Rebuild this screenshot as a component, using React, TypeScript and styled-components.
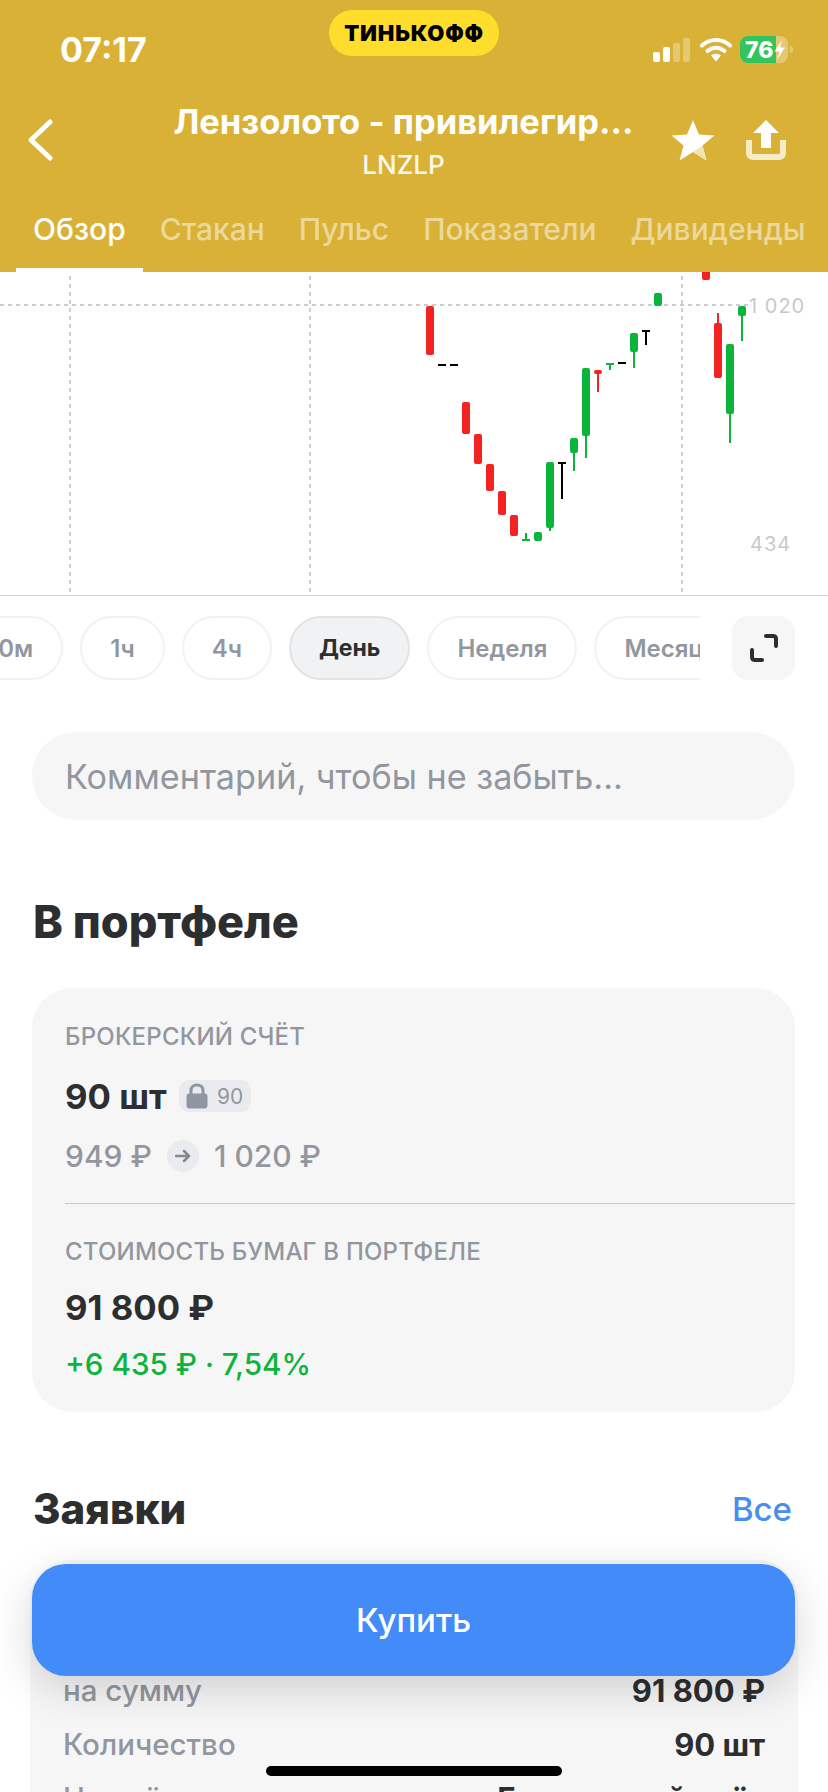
import React, { FunctionComponent } from 'react';
import styled, { createGlobalStyle } from 'styled-components';

const GlobalStyle = createGlobalStyle`
  html, body {
    margin: 0;
    padding: 0;
    background: #fff;
  }
  body {
    font-family: Inter, "Noto Sans", "Liberation Sans", sans-serif;
    color: #2d2e30;
  }
  * {
    box-sizing: border-box;
  }
`;

const Page = styled.div`
  position: relative;
  width: 828px;
  height: 1792px;
  overflow: hidden;
  background: #fff;
`;

const Header = styled.header`
  height: 272px;
  background: #d8b136;
  display: flex;
  flex-direction: column;
  color: #fff;
`;

const StatusBar = styled.div`
  height: 96px;
  display: grid;
  grid-template-columns: 269px 170px 1fr;
  padding: 10px 34px 0 60px;
`;

const Clock = styled.div`
  font-size: 34px;
  font-weight: 700;
  line-height: 38px;
  padding-top: 21px;
`;

const BrandPill = styled.div`
  height: 46px;
  width: 170px;
  border-radius: 23px;
  background: #ffdd2d;
  color: #000;
  font-size: 22px;
  font-weight: 900;
  letter-spacing: 0.8px;
  display: flex;
  align-items: center;
  justify-content: center;
`;

const StatusIcons = styled.div`
  display: flex;
  justify-content: flex-end;
  align-items: flex-start;
  padding-top: 26px;
`;

const NavBar = styled.div`
  height: 94px;
  display: flex;
  align-items: center;
  padding: 0 42px 6px 27px;
`;

const NavTitleBlock = styled.div`
  flex: 1;
  display: flex;
  flex-direction: column;
  align-items: center;
  padding-left: 83px;
`;

const NavTitle = styled.div`
  font-size: 34.5px;
  font-weight: 700;
  line-height: 42px;
  white-space: nowrap;
`;

const NavTicker = styled.div`
  font-size: 26px;
  font-weight: 500;
  line-height: 30px;
  margin-top: 7px;
  opacity: 0.92;
`;

const NavActions = styled.div`
  display: flex;
  align-items: center;
  gap: 31px;
`;

const Tabs = styled.nav`
  height: 82px;
  display: flex;
  padding-left: 16px;
  overflow: hidden;
`;

const Tab = styled.div<{ $active?: boolean }>`
  padding: 0 17px;
  display: flex;
  align-items: center;
  font-size: 30px;
  font-weight: 500;
  white-space: nowrap;
  color: ${(props) => (props.$active ? '#fff' : 'rgba(255, 255, 255, 0.5)')};
  border-bottom: 4px solid ${(props) => (props.$active ? '#fff' : 'transparent')};
`;

const ChartWrap = styled.div`
  height: 324px;
  border-bottom: 1px solid #cfcfcf;
`;

const ChartSvg = styled.svg`
  display: block;
  width: 828px;
  height: 323px;
`;

const PeriodRow = styled.div`
  display: flex;
  margin: 20px 33px 0 0;
  align-items: stretch;
`;

const PeriodScroll = styled.div`
  width: 700px;
  height: 64px;
  overflow: hidden;
  margin-right: 32px;
`;

const PeriodTrack = styled.div`
  display: flex;
  gap: 17px;
  margin-left: -47px;
  width: 900px;
`;

const PeriodChip = styled.div<{ $active?: boolean }>`
  height: 64px;
  padding: 0 28px;
  border-radius: 32px;
  flex: none;
  display: flex;
  align-items: center;
  font-size: ${(props) => (props.$active ? 23 : 24)}px;
  font-weight: ${(props) => (props.$active ? 700 : 600)};
  color: ${(props) => (props.$active ? '#2d2e30' : '#92979f')};
  background: ${(props) => (props.$active ? '#f1f2f4' : '#fff')};
  border: 2px solid ${(props) => (props.$active ? '#e1e3e5' : '#f1f2f4')};
`;

const ExpandButton = styled.div`
  width: 63px;
  height: 64px;
  border-radius: 16px;
  background: #f6f6f7;
  display: flex;
  align-items: center;
  justify-content: center;
`;

const CommentField = styled.div`
  margin: 52px 33px 0 32px;
  height: 88px;
  border-radius: 44px;
  background: #f6f6f7;
  color: #92979f;
  font-size: 34.2px;
  display: flex;
  align-items: center;
  padding-left: 33px;
`;

const SectionHead = styled.div`
  display: flex;
  justify-content: space-between;
  align-items: center;
  margin: 0 36px 0 33px;
`;

const SectionTitle = styled.h2<{ $size: number }>`
  margin: 0;
  font-size: ${(props) => props.$size}px;
  line-height: 48px;
  font-weight: 800;
  color: #2d2e30;
`;

const SectionLink = styled.div`
  font-size: 33px;
  font-weight: 500;
  color: #4a8df0;
`;

const PortfolioHead = styled(SectionHead)`
  margin-top: 78px;
`;

const OrdersHead = styled(SectionHead)`
  margin-top: 73px;
`;

const PortfolioCard = styled.section`
  margin: 42px 33px 0 32px;
  height: 424px;
  border-radius: 40px;
  background: #f6f6f7;
  padding: 34px 0 0 33px;
`;

const CardLabel = styled.div`
  font-size: 24px;
  line-height: 30px;
  font-weight: 500;
  letter-spacing: 0.2px;
  color: #92979f;
`;

const StrongValue = styled.div`
  font-size: 34.7px;
  line-height: 40px;
  font-weight: 700;
  color: #2d2e30;
`;

const QuantityRow = styled.div`
  display: flex;
  align-items: center;
  margin-top: 24px;
  gap: 12px;
`;

const LockBadge = styled.div`
  height: 32px;
  width: 72px;
  border-radius: 10px;
  background: #e9ebee;
  display: flex;
  align-items: center;
  justify-content: center;
  gap: 9px;
  font-size: 21px;
  color: #92979f;
`;

const PriceRow = styled.div`
  display: flex;
  align-items: center;
  margin-top: 20px;
  font-size: 30px;
  line-height: 40px;
  font-weight: 500;
  color: #92979f;
`;

const ArrowCircle = styled.div`
  width: 32px;
  height: 32px;
  border-radius: 50%;
  background: #e9ebee;
  margin: 0 15px;
  display: flex;
  align-items: center;
  justify-content: center;
`;

const CardDivider = styled.div`
  height: 1px;
  background: #c8cacd;
  margin: 27px 0 33px;
`;

const ValueBlock = styled.div`
  margin-top: 20px;
`;

const GainText = styled.div`
  margin-top: 17px;
  font-size: 29.7px;
  line-height: 40px;
  font-weight: 500;
  color: #0cb43c;
`;

const OrdersCard = styled.section`
  margin: 27px 30px 0;
  height: 300px;
  border-radius: 40px 40px 0 0;
  background: #f6f6f7;
  padding: 110px 33px 0;
  display: flex;
  flex-direction: column;
  gap: 14px;
`;

const OrderRow = styled.div`
  display: flex;
  justify-content: space-between;
  align-items: center;
  height: 40px;
`;

const OrderLabel = styled.span`
  color: #92979f;
  font-size: 29.5px;
  font-weight: 500;
`;

const OrderValue = styled.span`
  color: #2d2e30;
  font-size: 31px;
  font-weight: 700;
`;

const BuyButton = styled.button`
  position: absolute;
  left: 32px;
  top: 1564px;
  width: 763px;
  height: 112px;
  border: none;
  border-radius: 34px;
  background: #438bf8;
  color: #fff;
  font-family: inherit;
  font-size: 33px;
  font-weight: 500;
  box-shadow: 0 12px 44px rgba(0, 0, 0, 0.16);
`;

const HomeIndicator = styled.div`
  position: absolute;
  left: 266px;
  top: 1766px;
  width: 296px;
  height: 10px;
  border-radius: 5px;
  background: #000;
`;

type Candle = {
  x: number;
  top: number;
  bottom: number;
  color: string;
  wickTop?: number;
  wickBottom?: number;
};

const RED = '#f52222';
const GREEN = '#0cb43c';
const BLACK = '#000';

const candles: Candle[] = [
  { x: 430, top: 306, bottom: 355, color: RED },
  { x: 466, top: 402, bottom: 434, color: RED },
  { x: 478, top: 434, bottom: 464, color: RED },
  { x: 490, top: 464, bottom: 491, color: RED },
  { x: 502, top: 491, bottom: 515, color: RED },
  { x: 514, top: 515, bottom: 536, color: RED },
  { x: 538, top: 532, bottom: 541, color: GREEN },
  { x: 550, top: 462, bottom: 528, color: GREEN, wickBottom: 531 },
  { x: 574, top: 438, bottom: 453, color: GREEN, wickBottom: 471 },
  { x: 586, top: 368, bottom: 436, color: GREEN, wickBottom: 458 },
  { x: 598, top: 370, bottom: 374, color: RED, wickBottom: 392 },
  { x: 634, top: 333, bottom: 352, color: GREEN, wickBottom: 368 },
  { x: 658, top: 293, bottom: 306, color: GREEN },
  { x: 706, top: 268, bottom: 280, color: RED },
  { x: 718, top: 323, bottom: 378, color: RED, wickTop: 313 },
  { x: 730, top: 344, bottom: 414, color: GREEN, wickBottom: 443 },
  { x: 742, top: 306, bottom: 316, color: GREEN, wickBottom: 341 },
];

// flat candles: bar + wick, open == close
const ticks = [
  { x1: 438, x2: 446, y: 365, wick: 365, color: BLACK },
  { x1: 450, x2: 458, y: 365, wick: 365, color: BLACK },
  { x1: 522, x2: 530, y: 540, wick: 533, color: GREEN },
  { x1: 558, x2: 566, y: 463, wick: 499, color: BLACK },
  { x1: 606, x2: 614, y: 364, wick: 370, color: GREEN },
  { x1: 618, x2: 626, y: 363, wick: 363, color: BLACK },
  { x1: 642, x2: 650, y: 331, wick: 345, color: BLACK },
];

const PriceChart: FunctionComponent = () => (
  <ChartWrap>
    <ChartSvg viewBox="0 272 828 323">
      <g stroke="#cdcdcd" strokeWidth="2" strokeDasharray="4 4">
        <line x1="0" y1="305" x2="750" y2="305" />
        <line x1="70" y1="276" x2="70" y2="592" />
        <line x1="310" y1="276" x2="310" y2="592" />
        <line x1="682" y1="276" x2="682" y2="592" />
      </g>
      {candles.map((c) => (
        <g key={c.x}>
          {c.wickTop && <line x1={c.x} x2={c.x} y1={c.wickTop} y2={c.top} stroke={c.color} strokeWidth="2" />}
          {c.wickBottom && <line x1={c.x} x2={c.x} y1={c.bottom} y2={c.wickBottom} stroke={c.color} strokeWidth="2" />}
          <rect x={c.x - 4} y={c.top} width="8" height={c.bottom - c.top} rx="2" fill={c.color} />
        </g>
      ))}
      {ticks.map((t) => (
        <g key={t.x1} stroke={t.color} strokeWidth="2">
          <line x1={t.x1} x2={t.x2} y1={t.y} y2={t.y} />
          <line x1={(t.x1 + t.x2) / 2} x2={(t.x1 + t.x2) / 2} y1={t.y} y2={t.wick} />
        </g>
      ))}
      <g fill="#c9c9c9" fontSize="20" letterSpacing="1" fontFamily="Inter, sans-serif">
        <text x="749" y="313">1 020</text>
        <text x="750" y="551">434</text>
      </g>
    </ChartSvg>
  </ChartWrap>
);

const SignalIcon = () => (
  <svg width="38" height="24" viewBox="0 0 38 24" style={{ marginTop: 2 }}>
    <rect x="0" y="14" width="7" height="10" rx="2" fill="#fff" />
    <rect x="10" y="9" width="7" height="15" rx="2" fill="#fff" />
    <rect x="20" y="5" width="7" height="19" rx="2" fill="#fff" fillOpacity="0.3" />
    <rect x="30" y="0" width="7" height="24" rx="2" fill="#fff" fillOpacity="0.3" />
  </svg>
);

const WifiIcon = () => (
  <svg width="32" height="25" viewBox="0 0 32 25" style={{ marginLeft: 9, marginTop: 1 }}>
    <path d="M2 8.5C9.8 1 22.2 1 30 8.5" fill="none" stroke="#fff" strokeWidth="4" strokeLinecap="round" />
    <path d="M7.5 14C12.5 9.5 19.5 9.5 24.5 14" fill="none" stroke="#fff" strokeWidth="4" strokeLinecap="round" />
    <path d="M11 18.5C14 16 18 16 21 18.5L16 24.5Z" fill="#fff" />
  </svg>
);

const BatteryIcon = () => (
  <svg width="54" height="27" viewBox="0 0 54 27" style={{ marginLeft: 8 }}>
    <rect x="0" y="0" width="48" height="27" rx="8" fill="#fff" fillOpacity="0.3" />
    <path d="M8 0H36V27H8A8 8 0 0 1 0 19V8A8 8 0 0 1 8 0Z" fill="#34c45c" />
    <path d="M50 9.5C52.5 10.5 53.5 12 53.5 13.5S52.5 16.5 50 17.500Z" fill="#fff" fillOpacity="0.3" />
    <text x="5" y="22" fill="#fff" fontSize="23" fontWeight="800" fontFamily="Inter, sans-serif">76</text>
    <path d="M42 4L34.500 15.500H39.500L37.500 23L45 11.500H40Z" fill="#fff" />
  </svg>
);

const BackIcon = () => (
  <svg width="26" height="42" viewBox="0 0 26 42">
    <path d="M23 3L4 21L23 39" fill="none" stroke="#fff" strokeWidth="5" strokeLinecap="round" strokeLinejoin="round" />
  </svg>
);

const StarIcon = () => (
  <svg width="44" height="42" viewBox="0 0 44 42">
    <path d="M22 1L28 15.500L43.500 16.500L31.500 26.500L35.500 41.500L22 33L8.500 41.500L12.500 26.500L0.500 16.500L16 15.500Z" fill="#fff" />
    <path d="M31.500 26.500L35.500 41.500L22 33Z" fill="#f0e3b4" />
  </svg>
);

const ShareIcon = () => (
  <svg width="40" height="40" viewBox="0 0 40 40">
    <path d="M3 20V33C3 35.500 4.500 37 7 37H33C35.500 37 37 35.500 37 33V20" fill="none" stroke="#f5ecc8" strokeWidth="6" />
    <path d="M20 0L33 13H25V28H15V13H7Z" fill="#fff" />
  </svg>
);

const ExpandIcon = () => (
  <svg width="30" height="30" viewBox="0 0 30 30">
    <path d="M17 3H24C26 3 27 4 27 6V13M3 17V24C3 26 4 27 6 27H13" fill="none" stroke="#2d2e30" strokeWidth="4" strokeLinecap="round" />
  </svg>
);

const LockIcon = () => (
  <svg width="22" height="26" viewBox="0 0 22 26">
    <path d="M5 12V7.500C5 4 7.500 2 11 2S17 4 17 7.500V12" fill="none" stroke="#8f96a2" strokeWidth="3" />
    <rect x="0.500" y="10.500" width="21" height="15" rx="3" fill="#8f96a2" />
  </svg>
);

const ArrowIcon = () => (
  <svg width="16" height="14" viewBox="0 0 16 14">
    <path d="M1 7H14M9 2L14 7L9 12" fill="none" stroke="#82888f" strokeWidth="2.500" strokeLinecap="round" strokeLinejoin="round" />
  </svg>
);

const tabs = ['Обзор', 'Стакан', 'Пульс', 'Показатели', 'Дивиденды'];
const periods = ['30м', '1ч', '4ч', 'День', 'Неделя', 'Месяц'];

const App: FunctionComponent = () => (
  <Page>
    <GlobalStyle />
    <Header>
      <StatusBar>
        <Clock>07:17</Clock>
        <BrandPill>ТИНЬКОФФ</BrandPill>
        <StatusIcons>
          <SignalIcon />
          <WifiIcon />
          <BatteryIcon />
        </StatusIcons>
      </StatusBar>
      <NavBar>
        <BackIcon />
        <NavTitleBlock>
          <NavTitle>Лензолото - привилегир...</NavTitle>
          <NavTicker>LNZLP</NavTicker>
        </NavTitleBlock>
        <NavActions>
          <StarIcon />
          <ShareIcon />
        </NavActions>
      </NavBar>
      <Tabs>
        {tabs.map((tab, i) => (
          <Tab key={tab} $active={i === 0}>
            {tab}
          </Tab>
        ))}
      </Tabs>
    </Header>

    <PriceChart />

    <PeriodRow>
      <PeriodScroll>
        <PeriodTrack>
          {periods.map((period) => (
            <PeriodChip key={period} $active={period === 'День'}>
              {period}
            </PeriodChip>
          ))}
        </PeriodTrack>
      </PeriodScroll>
      <ExpandButton>
        <ExpandIcon />
      </ExpandButton>
    </PeriodRow>

    <CommentField>Комментарий, чтобы не забыть...</CommentField>

    <PortfolioHead>
      <SectionTitle $size={45}>В портфеле</SectionTitle>
    </PortfolioHead>

    <PortfolioCard>
      <CardLabel>БРОКЕРСКИЙ СЧЁТ</CardLabel>
      <QuantityRow>
        <StrongValue>90 шт</StrongValue>
        <LockBadge>
          <LockIcon />
          90
        </LockBadge>
      </QuantityRow>
      <PriceRow>
        949 ₽
        <ArrowCircle>
          <ArrowIcon />
        </ArrowCircle>
        1 020 ₽
      </PriceRow>
      <CardDivider />
      <CardLabel>СТОИМОСТЬ БУМАГ В ПОРТФЕЛЕ</CardLabel>
      <ValueBlock>
        <StrongValue>91 800 ₽</StrongValue>
      </ValueBlock>
      <GainText>+6 435 ₽ · 7,54%</GainText>
    </PortfolioCard>

    <OrdersHead>
      <SectionTitle $size={42}>Заявки</SectionTitle>
      <SectionLink>Все</SectionLink>
    </OrdersHead>

    <OrdersCard>
      <OrderRow>
        <OrderLabel>на сумму</OrderLabel>
        <OrderValue>91 800 ₽</OrderValue>
      </OrderRow>
      <OrderRow>
        <OrderLabel>Количество</OrderLabel>
        <OrderValue>90 шт</OrderValue>
      </OrderRow>
      <OrderRow>
        <OrderLabel>На счёте</OrderLabel>
        <OrderValue>Брокерский счёт</OrderValue>
      </OrderRow>
    </OrdersCard>

    <BuyButton>Купить</BuyButton>
    <HomeIndicator />
  </Page>
);

export default App;
